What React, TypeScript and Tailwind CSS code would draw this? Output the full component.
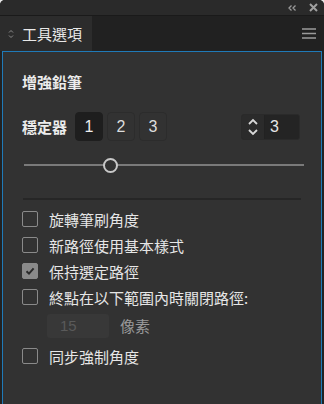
import React from "react";

const font = { fontFamily: '"Noto Sans CJK TC", "Noto Sans", "Liberation Sans", sans-serif' };

function CheckRow({ label, checked }: { label: string; checked?: boolean }) {
  return (
    <div className="flex items-center h-[26px]">
      <div
        className={
          "w-[16px] h-[16px] rounded-[2px] border flex items-center justify-center " +
          (checked ? "bg-[#8a8a8a] border-[#8a8a8a]" : "border-[#8a8a8a]")
        }
      >
        {checked && (
          <svg width="10" height="10" viewBox="0 0 10 10">
            <path d="M1.5 5.2 L4 7.6 L8.6 2.4" fill="none" stroke="#2a2a2a" strokeWidth="2" />
          </svg>
        )}
      </div>
      <span className="ml-[11px] text-[15px] text-[#e6e6e6] leading-none">{label}</span>
    </div>
  );
}

export default function App() {
  return (
    <div className="w-[324px] h-[404px] bg-[#e8e8e8]" style={font}>
      <div className="w-full h-full bg-[#222222] rounded-t-[5px] overflow-hidden flex flex-col">
        {/* top bar */}
        <div className="h-[16px] bg-[#2a2a2a] border-b border-[#1a1a1a] flex items-center justify-end pr-[6px] gap-[13px] shrink-0">
          <svg width="8" height="6" viewBox="0 0 8 6">
            <path d="M3.5 0.5 L1 3 L3.5 5.5 M7.5 0.5 L5 3 L7.5 5.5" fill="none" stroke="#9a9a9a" strokeWidth="1.3" />
          </svg>
          <svg width="9" height="9" viewBox="0 0 9 9">
            <path d="M1 1 L8 8 M8 1 L1 8" fill="none" stroke="#a0a0a0" strokeWidth="2" />
          </svg>
        </div>
        {/* tab row */}
        <div className="h-[35px] bg-[#212121] flex items-stretch shrink-0">
          <div className="w-[92px] bg-[#2c2c2c] flex items-center pl-[8px]">
            <svg width="6" height="10" viewBox="0 0 6 10">
              <path d="M1 3.5 L3 1.5 L5 3.5 M1 6.5 L3 8.5 L5 6.5" fill="none" stroke="#8a8a8a" strokeWidth="1" />
            </svg>
            <span className="ml-[8px] text-[15px] text-[#e8e8e8] leading-none">工具選項</span>
          </div>
          <div className="flex-1 flex items-center justify-end pr-[8px]">
            <svg width="14" height="11" viewBox="0 0 14 11">
              <path d="M0 1 H14 M0 5.5 H14 M0 10 H14" stroke="#9a9a9a" strokeWidth="1.5" />
            </svg>
          </div>
        </div>
        {/* panel */}
        <div className="flex-1 pl-[2px] pr-[2px] bg-[#222222]">
          <div className="h-full bg-[#323232] border border-[#1f7ab8] border-b-0 pl-[19px] pr-[19px] pt-[22px]">
            <div className="text-[15px] font-bold text-[#ececec] leading-none">增強鉛筆</div>
            <div className="flex items-center mt-[23px]">
              <span className="text-[15px] text-[#ececec] font-bold leading-none">穩定器</span>
              <div className="flex ml-[8px] gap-[4px]">
                <div className="w-[28px] h-[29px] rounded-[4px] bg-[#1e1e1e] border border-[#1e1e1e] flex items-center justify-center text-[16px] text-[#eeeeee]" style={{ fontFamily: '"Liberation Sans", sans-serif' }}>1</div>
                <div className="w-[28px] h-[29px] rounded-[4px] border border-[#2c2c2c] flex items-center justify-center text-[16px] text-[#dddddd]" style={{ fontFamily: '"Liberation Sans", sans-serif' }}>2</div>
                <div className="w-[28px] h-[29px] rounded-[4px] border border-[#2c2c2c] flex items-center justify-center text-[16px] text-[#dddddd]" style={{ fontFamily: '"Liberation Sans", sans-serif' }}>3</div>
              </div>
              <div className="ml-auto mr-[2px] flex h-[26px] rounded-[3px] border border-[#2a2a2a] bg-[#2a2a2a] overflow-hidden">
                <div className="w-[23px] flex items-center justify-center bg-[#2b2b2b] border-r border-[#222]">
                  <svg width="12" height="18" viewBox="0 0 12 18">
                    <path d="M2 6 L6 2 L10 6 M2 12 L6 16 L10 12" fill="none" stroke="#d8d8d8" strokeWidth="1.8" />
                  </svg>
                </div>
                <div className="w-[34px] bg-[#242424] flex items-center pl-[5px] text-[16px] text-[#e6e6e6]" style={{ fontFamily: '"Liberation Sans", sans-serif' }}>3</div>
              </div>
            </div>
            {/* slider */}
            <div className="relative mt-[17px] h-[14px] mr-[-2px] ml-[2px]">
              <div className="absolute left-0 right-0 top-[6px] h-[2px] bg-[#7a7a7a]" />
              <div className="absolute left-[79px] top-0 w-[15px] h-[15px] rounded-full border-2 border-[#c8c8c8] bg-[#323232]" />
            </div>
            <div className="mt-[26px] h-[2px] bg-[#262626] mx-[1px]" />
            <div className="mt-[6px] flex flex-col">
              <CheckRow label="旋轉筆刷角度" />
              <CheckRow label="新路徑使用基本樣式" />
              <CheckRow label="保持選定路徑" checked />
              <CheckRow label="終點在以下範圍內時關閉路徑:" />
              <div className="flex items-center ml-[25px] mt-[4px] mb-[5px]">
                <div className="w-[62px] h-[24px] rounded-[3px] bg-[#383838] flex items-center pl-[13px] text-[15px] text-[#5a5a5a]" style={{ fontFamily: '"Liberation Sans", sans-serif' }}>15</div>
                <span className="ml-[11px] text-[15px] text-[#9a9a9a]">像素</span>
              </div>
              <CheckRow label="同步強制角度" />
            </div>
          </div>
        </div>
      </div>
    </div>
  );
}
